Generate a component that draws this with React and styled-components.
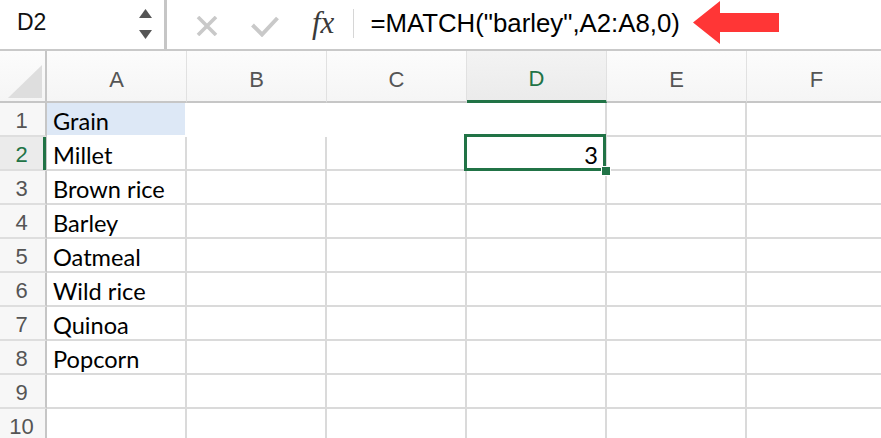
import React from 'react';
import styled, { createGlobalStyle } from 'styled-components';

const GlobalStyle = createGlobalStyle`
  html, body {
    margin: 0;
    padding: 0;
    background: #ffffff;
    overflow: hidden;
  }
`;

const columns = ['A', 'B', 'C', 'D', 'E', 'F'];

// 시트에 들어가는 값입니다. A열만 채워져 있고 D2에 결과가 있습니다.
const grains = ['Grain', 'Millet', 'Brown rice', 'Barley', 'Oatmeal', 'Wild rice', 'Quinoa', 'Popcorn', '', ''];

const App = () => {
  return (
    <Page>
      <GlobalStyle />
      <FormulaBar>
        <NameBox>
          <NameText>D2</NameText>
          <Spinner width="13" height="31" viewBox="0 0 13 31">
            <polygon points="6.5,0 13,9 0,9" fill="#555" />
            <polygon points="0,21 13,21 6.5,30" fill="#555" />
          </Spinner>
        </NameBox>
        <CancelIcon width="22" height="20" viewBox="0 0 22 20">
          <path d="M2 1 L20 19 M20 1 L2 19" stroke="#c9c9c9" strokeWidth="3.6" fill="none" />
        </CancelIcon>
        <ConfirmIcon width="28" height="22" viewBox="0 0 28 22">
          <polyline points="1.5,10 11,19.5 26.5,3" stroke="#c9c9c9" strokeWidth="4" fill="none" />
        </ConfirmIcon>
        <FxLabel>fx</FxLabel>
        <BarDivider />
        <FormulaText>=MATCH("barley",A2:A8,0)</FormulaText>
        <Arrow width="87" height="44" viewBox="0 0 87 44">
          <polygon points="0,21.5 27,0 27,12 86,12 86,31 27,31 27,43" fill="#ff3636" />
        </Arrow>
      </FormulaBar>

      <Sheet>
        <Corner>
          <CornerTriangle />
        </Corner>
        {columns.map((c) => (
          <ColHeader key={c} $active={c === 'D'}>{c}</ColHeader>
        ))}

        {grains.map((g, i) => {
          const row = i + 1;
          return (
            <React.Fragment key={row}>
              <RowHeader $active={row === 2}>{row}</RowHeader>
              {columns.map((c) => {
                const plain = row === 1 && (c === 'A' || c === 'B' || c === 'C');
                const selected = row === 2 && c === 'D';
                return (
                  <Cell
                    key={c}
                    $plain={plain}
                    $fill={row === 1 && c === 'A'}
                    $right={selected}
                    $selected={selected}
                  >
                    {c === 'A' && g}
                    {selected && '3'}
                    {selected && <Handle />}
                  </Cell>
                );
              })}
            </React.Fragment>
          );
        })}
      </Sheet>
    </Page>
  );
};

const Page = styled.div`
  width: 881px;
  height: 438px;
  overflow: hidden;
  background: #fff;
`;

const FormulaBar = styled.div`
  display: flex;
  align-items: center;
  height: 49px;
  border-bottom: 2px solid #c9c9c9;
  background: #fff;
`;

const NameBox = styled.div`
  box-sizing: border-box;
  width: 167px;
  height: 100%;
  display: flex;
  align-items: center;
  justify-content: space-between;
  padding: 0 12px 2px 17px;
  border-right: 3px solid #c6c6c6;
`;

const NameText = styled.span`
  font-family: "Liberation Sans", Arial, sans-serif;
  font-size: 23px;
  color: #111;
  margin-bottom: 3px;
`;

const Spinner = styled.svg`
  display: block;
  margin-top: 1px;
`;

const CancelIcon = styled.svg`
  display: block;
  margin-left: 29px;
  margin-top: 3px;
`;

const ConfirmIcon = styled.svg`
  display: block;
  margin-left: 33px;
  margin-top: 3px;
`;

const FxLabel = styled.span`
  margin-left: 33px;
  font-family: "Liberation Serif", "Times New Roman", serif;
  font-style: italic;
  font-size: 31px;
  color: #3a3a3a;
  margin-bottom: 4px;
`;

const BarDivider = styled.div`
  width: 1px;
  height: 29px;
  background: #d6d6d6;
  margin-left: 19px;
  margin-bottom: 2px;
`;

const FormulaText = styled.span`
  margin-left: 16px;
  font-family: "Liberation Sans", Arial, sans-serif;
  font-size: 25.8px;
  color: #000;
  white-space: nowrap;
  margin-bottom: 2px;
`;

const Arrow = styled.svg`
  display: block;
  margin-left: 13px;
  margin-bottom: 3px;
`;

const Sheet = styled.div`
  display: grid;
  grid-template-columns: 47px repeat(6, 140px);
  grid-template-rows: 52px;
  grid-auto-rows: 34px;
`;

const Corner = styled.div`
  position: relative;
  box-sizing: border-box;
  border-right: 2px solid #c6c6c6;
  border-bottom: 2px solid #c6c6c6;
  background: linear-gradient(#fcfcfc, #f5f5f5);
  padding: 14px 3px 3px 8px;
`;

const CornerTriangle = styled.div`
  width: 34px;
  height: 33px;
  background: #dedede;
  clip-path: polygon(100% 0, 100% 100%, 0 100%);
`;

const ColHeader = styled.div`
  box-sizing: border-box;
  display: flex;
  align-items: center;
  justify-content: center;
  padding-top: 7px;
  border-right: 1px solid #e1e1e1;
  border-bottom: ${(p) => (p.$active ? '3px solid #217346' : '2px solid #c6c6c6')};
  background: ${(p) => (p.$active ? 'linear-gradient(#f3f3f3, #ebebeb)' : 'linear-gradient(#fcfcfc, #f5f5f5)')};
  font-family: "Liberation Sans", Arial, sans-serif;
  font-size: 22px;
  color: ${(p) => (p.$active ? '#217346' : '#555')};
`;

const RowHeader = styled.div`
  position: relative;
  box-sizing: border-box;
  display: flex;
  align-items: center;
  justify-content: center;
  padding: 3px 2px 0 0;
  border-right: 2px solid #c6c6c6;
  border-bottom: 2px solid #dedede;
  background: ${(p) => (p.$active ? '#ebebeb' : '#f7f7f7')};
  font-family: "Liberation Sans", Arial, sans-serif;
  font-size: 22px;
  color: ${(p) => (p.$active ? '#217346' : '#555')};

  &::after {
    content: '';
    display: ${(p) => (p.$active ? 'block' : 'none')};
    position: absolute;
    top: 0;
    bottom: -1px;
    right: -1px;
    width: 3px;
    background: #217346;
  }
`;

const Cell = styled.div`
  position: relative;
  box-sizing: border-box;
  display: flex;
  align-items: center;
  justify-content: ${(p) => (p.$right ? 'flex-end' : 'flex-start')};
  padding: 3px 7px 0 6px;
  border-right: 2px solid ${(p) => (p.$plain ? 'transparent' : '#dadada')};
  border-bottom: 2px solid ${(p) => (p.$plain ? 'transparent' : '#dadada')};
  background: ${(p) => (p.$fill ? '#dde8f6' : '#fff')};
  background-clip: padding-box;
  font-family: Lato, "Open Sans", sans-serif;
  font-size: 23.6px;
  color: #000;
  white-space: nowrap;

  &::after {
    content: '';
    display: ${(p) => (p.$selected ? 'block' : 'none')};
    position: absolute;
    top: -3px;
    left: -3px;
    right: -1px;
    bottom: -2px;
    border: 3px solid #217346;
    pointer-events: none;
  }
`;

const Handle = styled.span`
  position: absolute;
  right: -6px;
  bottom: -7px;
  width: 8px;
  height: 8px;
  background: #217346;
  border: 1px solid #fff;
  z-index: 2;
`;

export default App;
